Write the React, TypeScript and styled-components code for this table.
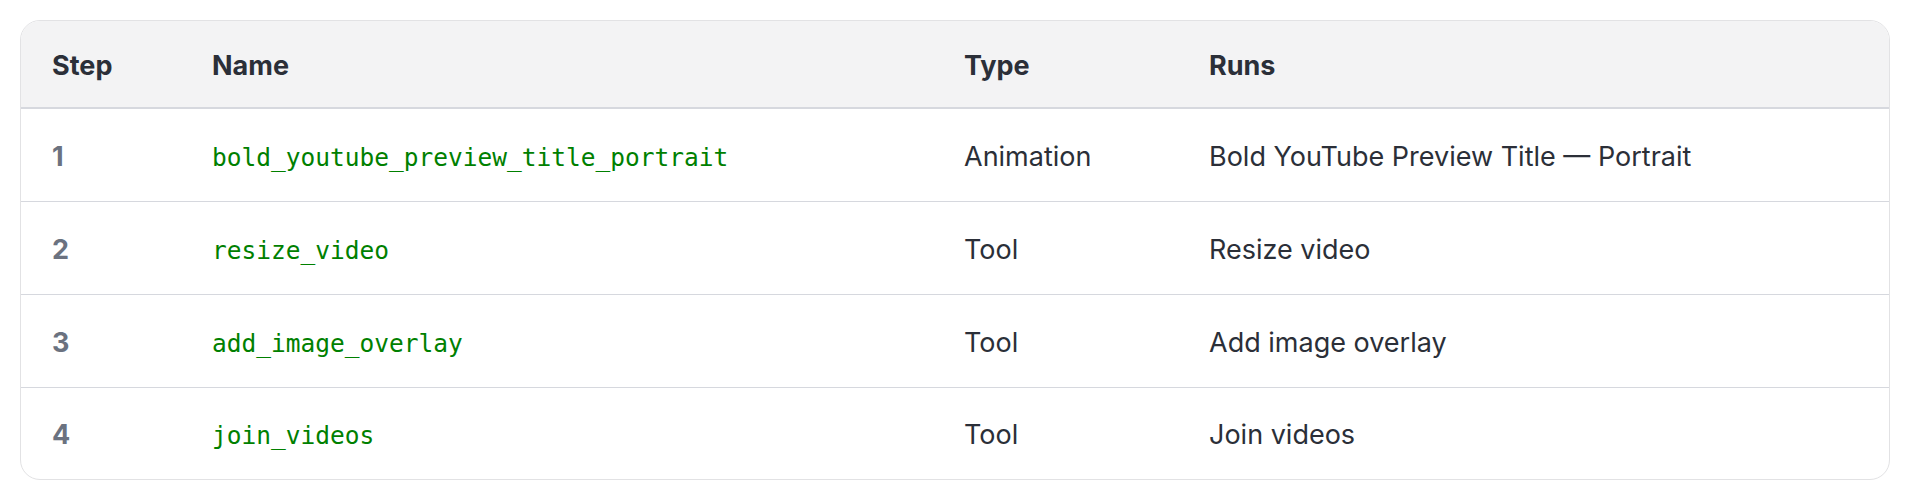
import React from "react";
import styled, { createGlobalStyle } from "styled-components";

const steps = [
    { id: 1, name: "bold_youtube_preview_title_portrait", type: "Animation", runs: "Bold YouTube Preview Title — Portrait" },
    { id: 2, name: "resize_video", type: "Tool", runs: "Resize video" },
    { id: 3, name: "add_image_overlay", type: "Tool", runs: "Add image overlay" },
    { id: 4, name: "join_videos", type: "Tool", runs: "Join videos" },
]

const App = () => {
    return <>
        <Global/>
        <Card>
            <Table>
                <colgroup>
                    <col style={{ width: 160 }}/>
                    <col style={{ width: 752 }}/>
                    <col style={{ width: 245 }}/>
                    <col/>
                </colgroup>
                <thead>
                    <tr>
                        <Th>Step</Th>
                        <Th>Name</Th>
                        <Th>Type</Th>
                        <Th>Runs</Th>
                    </tr>
                </thead>
                <tbody>
                    {steps.map(it => <Row key={it.id}>
                        <StepCell>{it.id}</StepCell>
                        <Td><Code>{it.name}</Code></Td>
                        <Td>{it.type}</Td>
                        <Td>{it.runs}</Td>
                    </Row>)}
                </tbody>
            </Table>
        </Card>
    </>
}
export default React.memo(App)


const Global = createGlobalStyle`
  html, body { margin: 0; background: #fff; }
  body {
    padding: 20px;
    font-family: Inter, "Liberation Sans", sans-serif;
    color: #2b2f38;
  }
`

const Card = styled.div`
  width: 1870px;
  box-sizing: border-box;
  border: 1px solid #e2e2e4;
  border-radius: 20px;
  overflow: hidden;
  background: #fff;
`

const Table = styled.table`
  width: 100%;
  table-layout: fixed;
  border-collapse: separate;
  border-spacing: 0;
`

const Th = styled.th`
  height: 88px;
  padding: 2px 31px 0;
  box-sizing: border-box;
  text-align: left;
  background: #f3f3f4;
  border-bottom: 2px solid #d6d8de;
  font: 700 27px Inter, "Liberation Sans", sans-serif;
  color: #2b2f38;
`

const Row = styled.tr`
  &:not(:last-child) td { border-bottom: 1px solid #d6d8de; }
  &:last-child td { height: 91px; }
`

const Td = styled.td`
  height: 93px;
  padding: 2px 31px 0;
  box-sizing: border-box;
  font: 400 27px Inter, "Liberation Sans", sans-serif;
  color: #2b2f38;
  white-space: nowrap;
`

const StepCell = styled(Td)`
  font-weight: 700;
  color: #6b7280;
`

const Code = styled.code`
  font: 400 24.5px "DejaVu Sans Mono", monospace;
  color: #008000;
`
